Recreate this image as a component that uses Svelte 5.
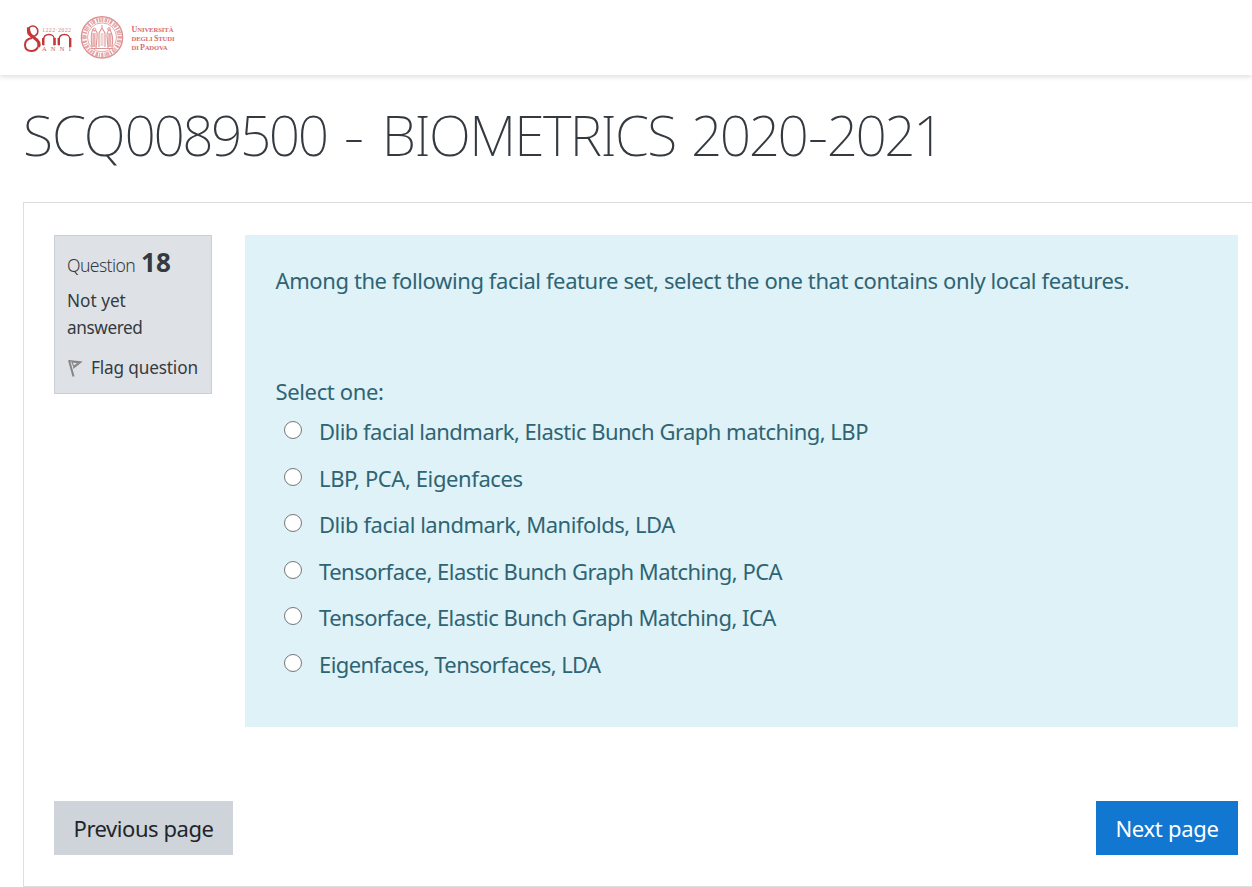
<script>
  const options = [
    { text: 'Dlib facial landmark, Elastic Bunch Graph matching, LBP', spacing: -0.52 },
    { text: 'LBP, PCA, Eigenfaces', spacing: -0.4 },
    { text: 'Dlib facial landmark, Manifolds, LDA', spacing: -0.45 },
    { text: 'Tensorface, Elastic Bunch Graph Matching, PCA', spacing: -0.51 },
    { text: 'Tensorface, Elastic Bunch Graph Matching, ICA', spacing: -0.52 },
    { text: 'Eigenfaces, Tensorfaces, LDA', spacing: -0.6 }
  ];
  const rays = Array.from({ length: 24 }, (_, i) => i * 15);
</script>

<header>
  <svg class="logo" width="156" height="48" viewBox="20 13 156 48" aria-label="Università degli Studi di Padova">
    <g fill="none" stroke="#c4373b">
      <ellipse cx="32.8" cy="31.2" rx="5" ry="5.2" stroke-width="1.6" />
      <path d="M28.5 27.5Q27.5 34 35 38.5Q40.5 42 38.5 47" stroke-width="3.2" />
      <path d="M32 38Q25 39 25 45T31.5 51Q36 51 38 47" stroke-width="2" />
      <path d="M43.5 45.5V40Q43.5 34.5 49 34.5T54.2 40V45.5M59 45.5V40Q59 34.5 64.5 34.5T69.8 40V45.5" stroke-width="1.3" />
      <path d="M43.2 38V45M54.6 38V45M58.8 38V45M70.2 38V47" stroke-width="2.4" />
    </g>
    <text x="42" y="31.5" font-size="6" textLength="29" fill="#d98082">1222·2022</text>
    <text x="42" y="51" font-size="6.5" textLength="29" fill="#cc5d61">A N N I</text>
    <g fill="none" stroke="#df9293">
      <circle cx="102" cy="37.4" r="20.6" stroke-width="1.4" />
      <circle cx="102" cy="37.4" r="17.6" stroke-width="4.2" stroke-dasharray="1.3 1.1 2.1 1.4" opacity=".75" />
      <circle cx="102" cy="37.4" r="14.5" stroke-width=".8" />
      {#each rays as angle}
        <path d="M102 16.5V22" transform="rotate({angle} 102 37.4)" stroke-width=".8" />
      {/each}
      <path d="M93 29Q90 35 92 47M94 31Q98 29 97 38L96 48M99 47V33L102 28 105 33V47M108 48L107 36Q107 30 110 30Q114 36 112 47M91 48.5H113M102 25V29" stroke-width="1.1" />
      <path d="M94 33V47M109.8 33V47" stroke-width="3.2" opacity=".7" />
      <path d="M102 33V46" stroke-width="3" opacity=".4" />
      <circle cx="94.5" cy="29.5" r="1.3" />
      <circle cx="109" cy="29" r="1.3" />
    </g>
    <g fill="#d56c70" font-size="7" font-weight="700">
      <text x="131.5" y="31.6" textLength="42"><tspan font-size="8">U</tspan><tspan font-size="6.7">NIVERSITÀ</tspan></text>
      <text x="131.5" y="41" font-size="6.7" textLength="43">DEGLI <tspan font-size="8">S</tspan>TUDI</text>
      <text x="131.5" y="50" font-size="6.7" textLength="36">DI <tspan font-size="8">P</tspan>ADOVA</text>
    </g>
  </svg>
</header>

<main>
  <h1>SCQ<span class="digits">0089500</span> <span class="dash">-</span> <span class="name">BIOMETRICS</span> <span class="digits year">2020<span class="hyphen">-</span>2021</span></h1>

  <section class="attempt">
    <div class="question">
      <aside>
        <h2><span>Question</span> <b>18</b></h2>
        <p>Not yet<br /><span class="state">answered</span></p>
        <div class="flag">
          <svg width="16" height="18" viewBox="0 0 16 18" fill="none" stroke="#858585">
            <path d="M2 1.3L6.5 17.5" stroke-width="2" />
            <path d="M2 1.6L14.3 3 6.2 9.3M4.9 3L6.7 7.4L11.4 3.6Z" stroke-width="1.1" />
          </svg>
          <span>Flag question</span>
        </div>
      </aside>

      <div class="content">
        <p class="prompt">Among the following facial feature set, select the one that contains only local features.</p>
        <p class="select">Select one:</p>
        <div class="answers">
          {#each options as option}
            <label>
              <input type="radio" name="answer" />
              <span style="letter-spacing: {option.spacing}px">{option.text}</span>
            </label>
          {/each}
        </div>
      </div>
    </div>

    <nav>
      <button class="previous"><span>Previous page</span></button>
      <button class="next"><span>Next page</span></button>
    </nav>
  </section>
</main>

<style>
  :global(body) { margin: 0; background: #fff; overflow: hidden; }
  :global(#app) { font-family: 'Noto Sans', 'Open Sans', sans-serif; color: #373a3c; }
  header { box-sizing: border-box; height: 75px; padding: 13px 20px; box-shadow: 0 2px 5px rgba(0, 0, 0, .13); }
  .logo { display: block; font-family: 'Liberation Serif', serif; }
  main { padding-left: 23px; }
  h1 { margin: 0; height: 127px; box-sizing: border-box; padding-top: 22px; font-family: 'Noto Sans', 'Open Sans', sans-serif; font-size: 55px; font-weight: 250; line-height: 75px; letter-spacing: -1px; white-space: nowrap; color: #343a40; }
  .digits { letter-spacing: -2.5px; }
  .dash { display: inline-block; margin: 0 7px 0 5px; transform: scaleX(1.15); }
  .name { letter-spacing: -1.6px; }
  .year { margin-left: 2px; }
  .hyphen { display: inline-block; margin: 0 2px 0 3px; transform: scaleX(1.15); }
  .attempt { box-sizing: border-box; height: 685px; border: 1px solid #dedede; border-right: 0; padding: 32px 14px 0 30px; }
  .question { display: flex; justify-content: space-between; align-items: flex-start; }
  aside { box-sizing: border-box; width: 158px; height: 159px; border: 1px solid #caced6; background: #dee2e6; padding: 9px 12px; font-size: 17.2px; color: #343a40; }
  h2 { display: flex; align-items: baseline; gap: 6px; margin: 0; height: 42px; line-height: 34px; font-weight: 300; font-size: 17.6px; }
  h2 span { letter-spacing: -.6px; }
  h2 b { font-size: 26px; font-weight: 700; }
  aside p { margin: 0; line-height: 27px; }
  .state { letter-spacing: -.4px; }
  .flag { display: flex; align-items: center; gap: 8px; margin-top: 13px; line-height: 27px; letter-spacing: -.15px; white-space: nowrap; }
  .flag svg { flex: none; }
  .content { box-sizing: border-box; width: 993px; height: 492px; background: #def2f8; padding: 28px 30.5px; color: #2f6473; font-size: 22px; line-height: 34px; white-space: nowrap; }
  .content p { margin: 0; }
  .prompt { height: 111px; letter-spacing: -.4px; }
  .select { height: 34px; letter-spacing: -.36px; }
  .answers { padding: 0 0 0 8.5px; margin-top: 6px; }
  label { display: flex; align-items: flex-start; height: 46.55px; gap: 17px; }
  input { appearance: none; box-sizing: border-box; width: 18px; height: 18px; margin: 7px 0 0; border: 1.5px solid #767676; border-radius: 50%; background: #fff; flex: none; }
  nav { display: flex; justify-content: space-between; margin-top: 74px; }
  button { height: 54px; padding: 0; border: 0; font: 22px/54px 'Noto Sans', 'Open Sans', sans-serif; white-space: nowrap; }
  .previous { width: 179px; background: #ced4da; color: #212529; letter-spacing: -.45px; }
  .next { width: 142px; background: #1177d1; color: #fff; letter-spacing: -.3px; }
</style>
